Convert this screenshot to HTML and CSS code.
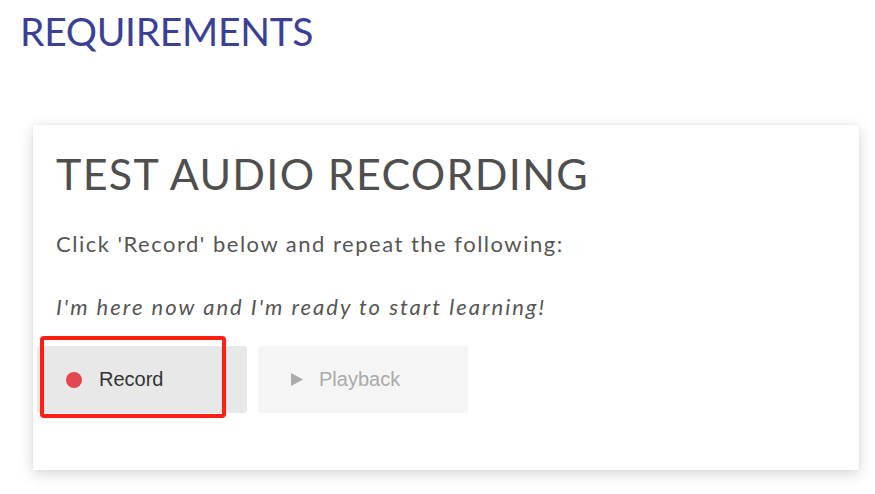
FILE: index.html
```html
<!DOCTYPE html>
<html lang="en">
<head>
<meta charset="utf-8">
<title>Requirements</title>
<link rel="stylesheet" href="styles.css">
</head>
<body>
  <h1 class="page-title">REQUIREMENTS</h1>
  <section class="card">
    <div class="card-text">
      <h2 class="card-title">TEST AUDIO RECORDING</h2>
      <p class="instruction">Click 'Record' below and repeat the following:</p>
      <p class="phrase">I'm here now and I'm ready to start learning!</p>
    </div>
    <div class="actions">
      <button class="btn btn-record" type="button"><span class="dot"></span>Record</button>
      <button class="btn btn-play" type="button" disabled>
        <svg class="tri" width="12" height="13" viewBox="0 0 12 13"><path d="M0 0 L12 6.5 L0 13 Z" fill="#aaaaaa"/></svg>Playback
      </button>
      <span class="highlight"></span>
    </div>
  </section>
</body>
</html>
```
FILE: styles.css
```css
html, body {
  margin: 0;
  padding: 0;
  background: #ffffff;
}
body {
  width: 875px;
  height: 494px;
  overflow: hidden;
  font-family: "Lato", "Open Sans", sans-serif;
}
.page-title {
  margin: 8px 0 0 20px;
  font-size: 39px;
  line-height: 46px;
  font-weight: 400;
  color: #3b3f95;
  letter-spacing: -0.3px;
}
.card {
  margin: 71px 0 0 33px;
  width: 826px;
  height: 345px;
  box-sizing: border-box;
  padding: 23px 0 0 4px;
  background: #ffffff;
  box-shadow: 0 4px 14px rgba(0, 0, 0, 0.16), 0 0 3px rgba(0, 0, 0, 0.06);
}
.card-text {
  padding-left: 19px;
}
.card-title {
  margin: 0;
  font-size: 43px;
  line-height: 52px;
  font-weight: 400;
  color: #4f4f4f;
  letter-spacing: 1.3px;
}
.instruction {
  margin: 31px 0 0;
  font-size: 22px;
  line-height: 26px;
  color: #555555;
  letter-spacing: 1.5px;
}
.phrase {
  margin: 37px 0 0;
  font-size: 22px;
  line-height: 26px;
  font-style: italic;
  color: #555555;
  letter-spacing: 2px;
}
.actions {
  position: relative;
  display: flex;
  gap: 11px;
  margin-top: 26px;
}
.btn {
  display: flex;
  align-items: center;
  width: 210px;
  height: 67px;
  border: 0;
  border-radius: 3px;
  padding: 0;
  font-family: "Liberation Sans", Arial, sans-serif;
  font-size: 20px;
}
.btn-record {
  background: #e8e8e8;
  color: #333333;
  padding-left: 29px;
}
.dot {
  width: 16px;
  height: 16px;
  border-radius: 50%;
  background: #e2484d;
  margin-right: 17px;
}
.btn-play {
  background: #f5f5f5;
  color: #aaaaaa;
  padding-left: 33px;
}
.tri {
  margin-right: 16px;
}
.highlight {
  position: absolute;
  left: 3px;
  top: -10px;
  width: 186px;
  height: 82px;
  box-sizing: border-box;
  border: 4px solid #ff1e12;
  border-radius: 4px;
  pointer-events: none;
}
```
